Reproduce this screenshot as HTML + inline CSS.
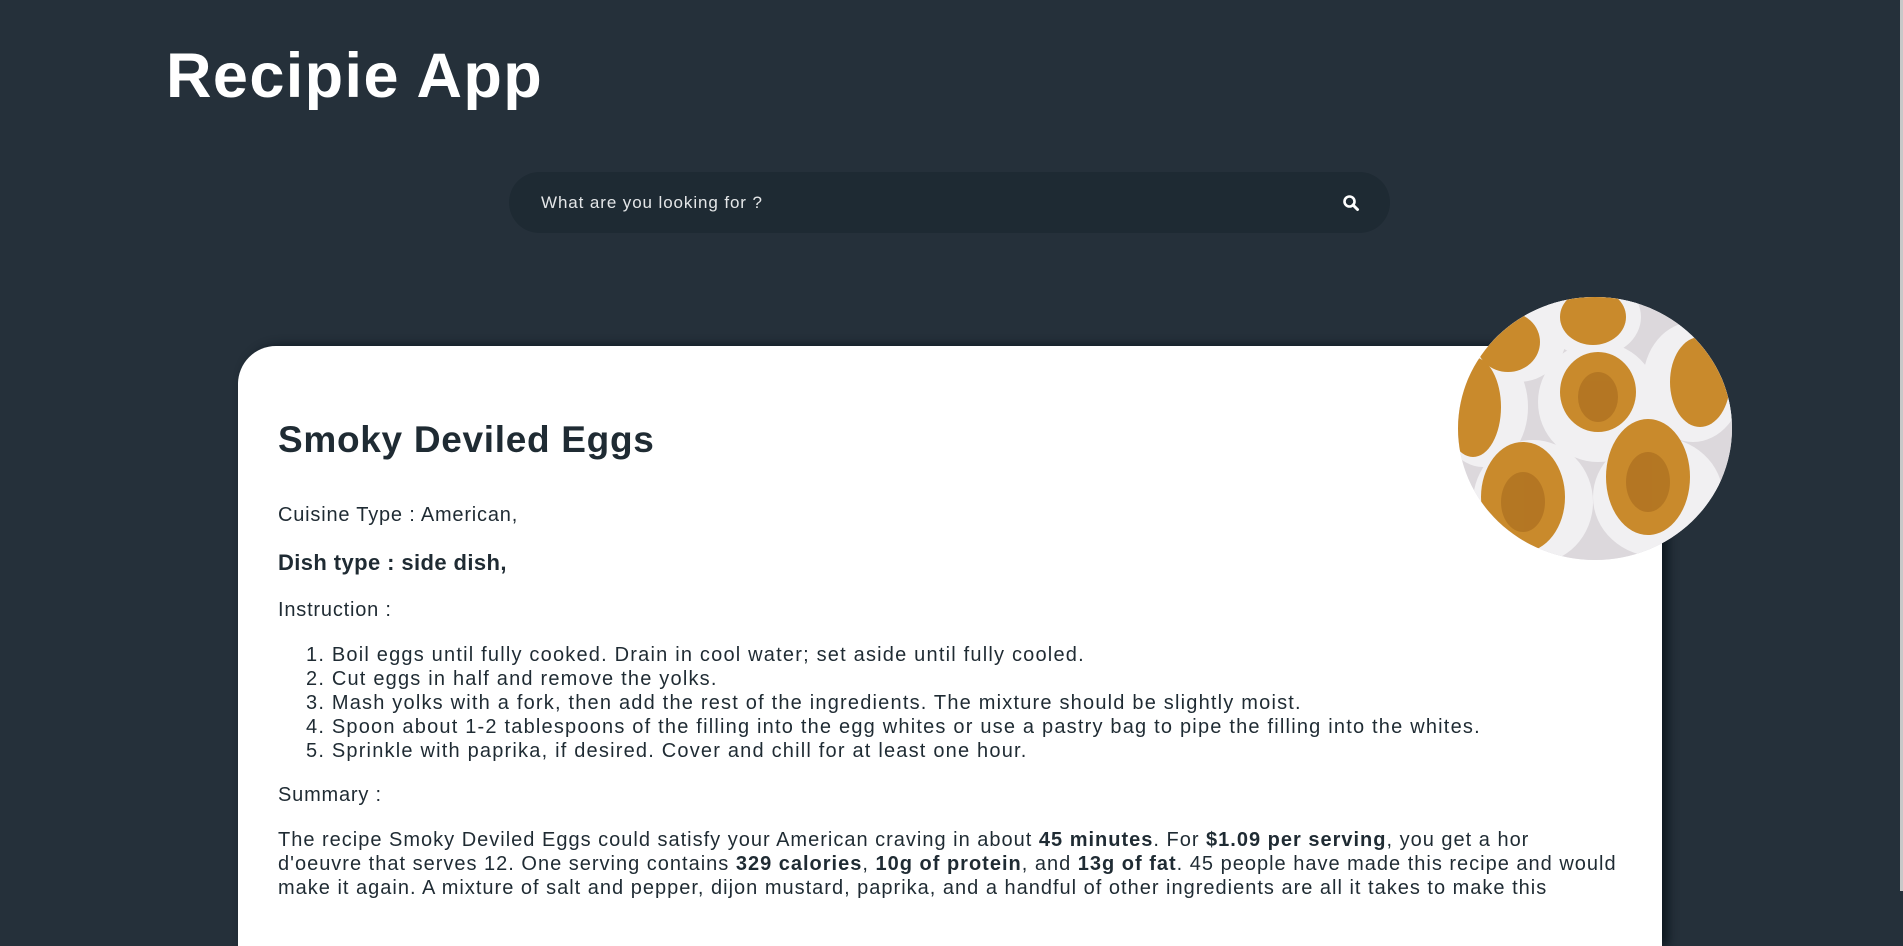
<!DOCTYPE html>
<html><head><meta charset="utf-8"><style>
*{margin:0;padding:0;box-sizing:border-box}
html,body{width:1903px;height:891px;overflow:hidden;background:#25303a;font-family:"Liberation Sans",sans-serif}
h1{position:absolute;left:166px;top:40px;font-size:63px;font-weight:bold;color:#fff;letter-spacing:1.4px}
.search{position:absolute;left:509px;top:172px;width:881px;height:61px;border-radius:31px;background:#1e2a33}
.search span{position:absolute;left:32px;top:21px;font-size:17px;color:#e4e6e8;letter-spacing:0.9px}
.card{position:absolute;left:238px;top:346px;width:1424px;height:600px;background:#fff;border-top-left-radius:38px;box-shadow:6px 0 10px rgba(10,20,28,.9)}
.c{color:#1f2b33;font-size:20px;position:absolute;left:278px;white-space:nowrap;letter-spacing:1.2px}
.img{position:absolute;left:1458px;top:297px;width:274px;height:263px;border-radius:50%;overflow:hidden;background:#e8e6ea}
.sb{position:absolute;right:0;top:0;width:3px;height:891px;background:#c8c8c8}
</style></head><body>
<h1>Recipie App</h1>
<div class="search"><span>What are you looking for ?</span>
<svg style="position:absolute;left:833px;top:22px" width="18" height="18" viewBox="0 0 18 18"><circle cx="7.5" cy="7.5" r="5" fill="none" stroke="#fff" stroke-width="2.6"/><path d="M11 11 L15.5 15.5" stroke="#fff" stroke-width="3" stroke-linecap="round"/></svg></div>
<div class="card"></div>
<div class="img"><svg width="274" height="263" viewBox="0 0 274 263">
<rect width="274" height="263" fill="#dcd8dc"/>
<g fill="#f1f0f2">
<ellipse cx="60" cy="40" rx="48" ry="45"/><ellipse cx="135" cy="20" rx="48" ry="40"/><ellipse cx="235" cy="85" rx="50" ry="60"/>
<ellipse cx="140" cy="105" rx="60" ry="60"/><ellipse cx="25" cy="110" rx="45" ry="60"/>
<ellipse cx="75" cy="205" rx="60" ry="62"/><ellipse cx="200" cy="200" rx="65" ry="60"/></g>
<g fill="#c98a2c">
<ellipse cx="50" cy="45" rx="32" ry="30"/><ellipse cx="135" cy="20" rx="33" ry="28"/><ellipse cx="242" cy="85" rx="30" ry="45"/>
<ellipse cx="140" cy="95" rx="38" ry="40"/><ellipse cx="15" cy="110" rx="28" ry="50"/>
<ellipse cx="65" cy="200" rx="42" ry="55"/><ellipse cx="190" cy="180" rx="42" ry="58"/></g>
<g fill="#a76a1e" opacity=".6"><ellipse cx="140" cy="100" rx="20" ry="25"/><ellipse cx="65" cy="205" rx="22" ry="30"/><ellipse cx="190" cy="185" rx="22" ry="30"/></g>
</svg></div>
<div class="c" style="top:419px;font-size:37px;font-weight:bold;letter-spacing:0.7px">Smoky Deviled Eggs</div>
<div class="c" style="top:504px;letter-spacing:0.8px">Cuisine Type : American,</div>
<div class="c" style="top:550px;font-size:22px;font-weight:bold;letter-spacing:0.4px">Dish type : side dish,</div>
<div class="c" style="top:599px;letter-spacing:0.8px">Instruction :</div>
<div class="c" style="top:643px;left:306px;line-height:24px">1. Boil eggs until fully cooked. Drain in cool water; set aside until fully cooled.<br>2. Cut eggs in half and remove the yolks.<br>3. Mash yolks with a fork, then add the rest of the ingredients. The mixture should be slightly moist.<br>4. Spoon about 1-2 tablespoons of the filling into the egg whites or use a pastry bag to pipe the filling into the whites.<br>5. Sprinkle with paprika, if desired. Cover and chill for at least one hour.</div>
<div class="c" style="top:784px;letter-spacing:0.8px">Summary :</div>
<div class="c" style="top:828px;line-height:24px;letter-spacing:1.0px">The recipe Smoky Deviled Eggs could satisfy your American craving in about <b>45 minutes</b>. For <b>$1.09 per serving</b>, you get a hor<br>d'oeuvre that serves 12. One serving contains <b>329 calories</b>, <b>10g of protein</b>, and <b>13g of fat</b>. 45 people have made this recipe and would<br>make it again. A mixture of salt and pepper, dijon mustard, paprika, and a handful of other ingredients are all it takes to make this</div>
<div class="sb"></div>
</body></html>
